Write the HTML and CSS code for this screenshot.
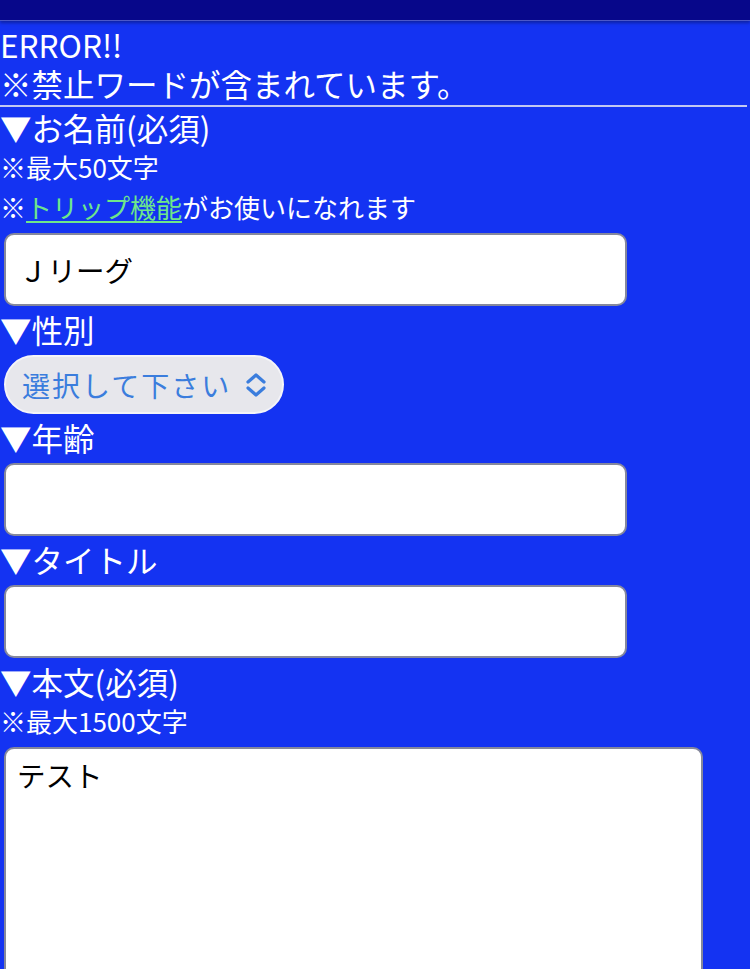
FILE: index.html
```html
<!DOCTYPE html>
<html lang="ja">
<head>
<meta charset="utf-8">
<title>投稿フォーム</title>
<link rel="stylesheet" href="styles.css">
</head>
<body>
<header class="topbar"></header>
<div class="error">
  <p class="error-line">ERROR!!</p>
  <p class="error-line">※禁止ワードが含まれています。</p>
</div>
<hr class="divider">
<form class="form">
  <p class="label">▼お名前(必須)</p>
  <p class="note">※最大50文字</p>
  <p class="note">※<a class="link" href="#">トリップ機能</a>がお使いになれます</p>
  <input class="field" type="text" value="Ｊリーグ">

  <p class="label">▼性別</p>
  <div class="select">
    <span class="select-text">選択して下さい</span>
    <svg class="chev" width="22" height="26" viewBox="0 0 22 26" aria-hidden="true">
      <path d="M3 10 L11 3 L19 10" fill="none" stroke="#3b7ddd" stroke-width="3.2" stroke-linecap="round" stroke-linejoin="round"/>
      <path d="M3 16 L11 23 L19 16" fill="none" stroke="#3b7ddd" stroke-width="3.2" stroke-linecap="round" stroke-linejoin="round"/>
    </svg>
  </div>

  <p class="label">▼年齢</p>
  <input class="field" type="text" value="">

  <p class="label">▼タイトル</p>
  <input class="field" type="text" value="">

  <p class="label">▼本文(必須)</p>
  <p class="note">※最大1500文字</p>
  <textarea class="body-area">テスト</textarea>
</form>
</body>
</html>
```
FILE: styles.css
```css
html, body {
  margin: 0;
  padding: 0;
}
body {
  background: #1433f2;
  color: #ffffff;
  font-family: "Noto Sans CJK JP", "Noto Sans", sans-serif;
  overflow: hidden;
}
.topbar {
  height: 20px;
  background: #07078a;
  border-bottom: 1px solid #4c58c8;
  box-shadow: 0 2px 3px rgba(0, 0, 20, 0.35);
}
.error {
  padding-top: 4px;
}
.error-line {
  margin: 0;
  font-size: 31.5px;
  line-height: 39px;
}
.divider {
  border: 0;
  height: 2px;
  background: #c3c9f2;
  margin: 2px 3px 0 0;
}
.form {
  display: flex;
  flex-direction: column;
  align-items: flex-start;
}
.label {
  margin: 3px 0 0 0;
  font-size: 31.5px;
  line-height: 40px;
}
.form > .label:first-child {
  margin-top: 0;
}
.note {
  margin: 0;
  font-size: 26px;
  line-height: 40px;
}
.link {
  color: #6ee68a;
  text-decoration: underline;
  text-decoration-thickness: 1.5px;
  text-underline-offset: 3px;
}
.field {
  box-sizing: border-box;
  width: 623px;
  height: 73px;
  margin: 6px 0 0 4px;
  border: 2px solid #85889c;
  border-radius: 10px;
  background: #ffffff;
  padding: 0 0 0 13px;
  font-family: "Noto Sans CJK JP", "Noto Sans", sans-serif;
  font-size: 28.5px;
  color: #000000;
  outline: none;
}
.select {
  box-sizing: border-box;
  width: 280px;
  height: 59px;
  margin: 6px 0 0 4px;
  border: 2px solid #f4f4f8;
  border-radius: 30px;
  background: #e7e7ec;
  display: flex;
  align-items: center;
  gap: 14px;
  padding-left: 16px;
}
.select-text {
  color: #3b7ddd;
  font-size: 28px;
  line-height: 1;
  letter-spacing: 2px;
}
.chev {
  flex: none;
}
.body-area {
  box-sizing: border-box;
  width: 699px;
  height: 280px;
  margin: 6px 0 0 4px;
  border: 2px solid #85889c;
  border-radius: 10px;
  background: #ffffff;
  padding: 8px 11px;
  font-family: "Noto Sans CJK JP", "Noto Sans", sans-serif;
  font-size: 28.5px;
  line-height: 36px;
  color: #000000;
  resize: none;
  outline: none;
}
```
